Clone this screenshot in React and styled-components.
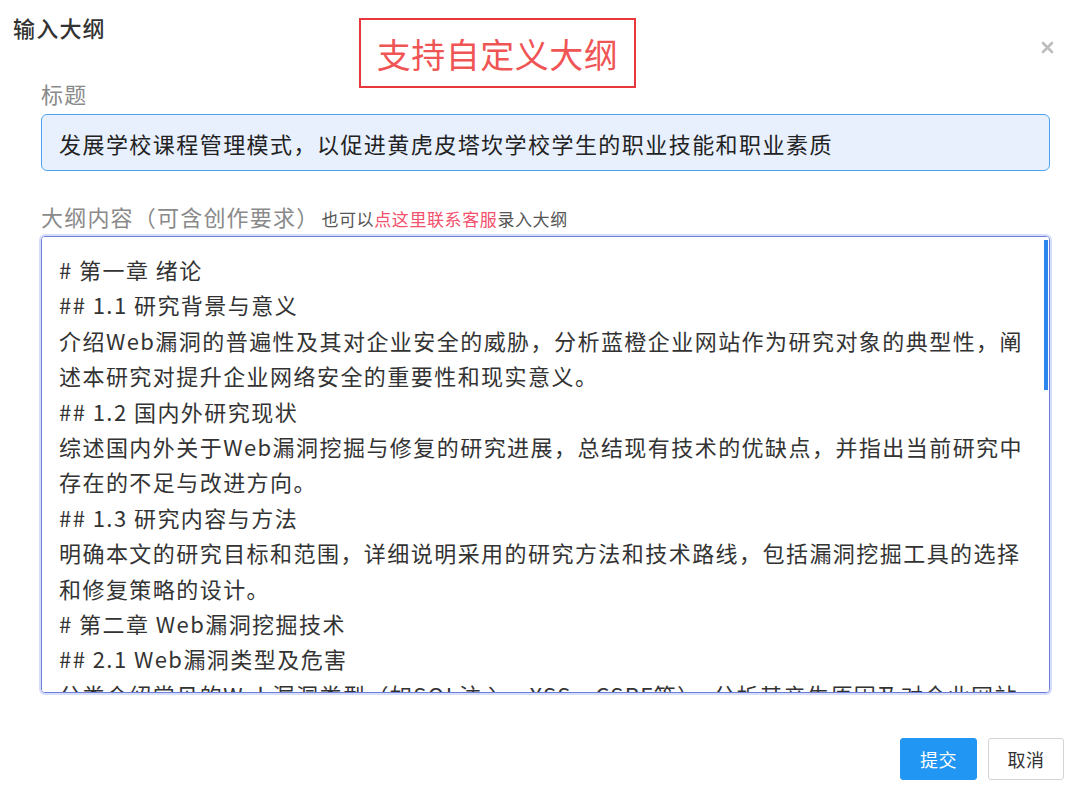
import React from 'react'
import styled, { createGlobalStyle } from 'styled-components'

const GlobalStyle = createGlobalStyle`
  html, body {
    margin: 0;
    padding: 0;
    background: #fff;
  }
  body {
    font-family: "Noto Sans CJK SC", "Noto Sans", sans-serif;
    color: #333;
  }
`

const Modal = styled.div`
  position: relative;
  width: 1080px;
  height: 795px;
  display: flex;
  flex-direction: column;
  box-sizing: border-box;
  background: #fff;
`

const Header = styled.div`
  height: 54px;
  display: flex;
  align-items: center;
  padding-left: 13px;
`

const Title = styled.h3`
  margin: 0;
  font-size: 22px;
  font-weight: 500;
  letter-spacing: 1.2px;
  color: #333;
`

const Annotation = styled.div`
  position: absolute;
  left: 359px;
  top: 18px;
  width: 277px;
  height: 70px;
  box-sizing: border-box;
  border: 2px solid #e8383d;
  display: flex;
  align-items: center;
  justify-content: center;
  font-size: 34px;
  color: #f05555;
  letter-spacing: 0.5px;
`

const CloseButton = styled.button`
  position: absolute;
  top: 38px;
  right: 24px;
  width: 18px;
  height: 18px;
  padding: 0;
  border: 0;
  background: none;
  cursor: pointer;
  display: flex;
  align-items: center;
  justify-content: center;
`

const Body = styled.div`
  padding: 24px 30px 0 41px;
  display: flex;
  flex-direction: column;
`

const Label = styled.label`
  display: flex;
  align-items: baseline;
  height: 30px;
  font-size: 22px;
  line-height: 30px;
  letter-spacing: 1.2px;
  color: #8a8a8a;
  margin-bottom: ${({ $gap }) => $gap}px;
  white-space: nowrap;
`

const Hint = styled.span`
  font-size: 17px;
  line-height: 20px;
  letter-spacing: 0.6px;
  color: #555;
  margin-left: 2px;
`

const HintLink = styled.a`
  color: #f2506c;
  text-decoration: none;
  cursor: pointer;
`

const TitleInput = styled.input`
  box-sizing: border-box;
  width: 100%;
  height: 57px;
  padding: 0 17px;
  border: 1px solid #4ea4f4;
  border-radius: 6px;
  background: #e8f0fe;
  font-family: inherit;
  font-size: 22px;
  letter-spacing: 1.45px;
  color: #222;
  outline: none;
  margin-bottom: 30px;
`

const AreaWrap = styled.div`
  position: relative;
  height: 457px;
`

const OutlineArea = styled.textarea`
  box-sizing: border-box;
  width: 100%;
  height: 100%;
  padding: 15px 8px 16px 17px;
  border: 1px solid #6b80dc;
  border-radius: 4px;
  box-shadow: 0 0 0 2px rgba(130, 148, 232, 0.32);
  font-family: inherit;
  font-size: 22px;
  line-height: 35.4px;
  letter-spacing: 1.45px;
  color: #333;
  resize: none;
  outline: none;
  white-space: pre-wrap;
  overflow-y: auto;
  overflow-x: hidden;
  scrollbar-width: none;

  &::-webkit-scrollbar {
    display: none;
  }
`

const ScrollThumb = styled.div`
  position: absolute;
  top: 4px;
  right: 2px;
  width: 4px;
  height: 150px;
  background: #2d86ee;
  pointer-events: none;
`

const Footer = styled.div`
  display: flex;
  justify-content: flex-end;
  align-items: flex-start;
  gap: 11px;
  padding: 45px 16px 0 0;
`

const Button = styled.button`
  width: ${({ $primary }) => ($primary ? 77 : 76)}px;
  height: 42px;
  border-radius: 3px;
  border: 1px solid ${({ $primary }) => ($primary ? '#2196f3' : '#d4d4d4')};
  background: ${({ $primary }) => ($primary ? '#2196f3' : '#fff')};
  color: ${({ $primary }) => ($primary ? '#fff' : '#333')};
  font-family: inherit;
  font-size: 18px;
  letter-spacing: 0.5px;
  cursor: pointer;
`

const outline = `# 第一章 绪论
## 1.1 研究背景与意义
介绍Web漏洞的普遍性及其对企业安全的威胁，分析蓝橙企业网站作为研究对象的典型性，阐
述本研究对提升企业网络安全的重要性和现实意义。
## 1.2 国内外研究现状
综述国内外关于Web漏洞挖掘与修复的研究进展，总结现有技术的优缺点，并指出当前研究中
存在的不足与改进方向。
## 1.3 研究内容与方法
明确本文的研究目标和范围，详细说明采用的研究方法和技术路线，包括漏洞挖掘工具的选择
和修复策略的设计。
# 第二章 Web漏洞挖掘技术
## 2.1 Web漏洞类型及危害
分类介绍常见的Web漏洞类型（如SQL注入、XSS、CSRF等），分析其产生原因及对企业网站
的潜在危害。
## 2.2 漏洞挖掘方法
介绍静态分析、动态分析与模糊测试等漏洞挖掘方法，比较各自的适用场景和局限性。
## 2.3 漏洞挖掘工具
介绍常用的漏洞扫描与渗透测试工具，说明其原理、功能及使用方法。
# 第三章 蓝橙企业网站漏洞挖掘实践
## 3.1 网站架构分析
分析蓝橙企业网站的系统架构、技术栈与业务功能，确定测试范围。
## 3.2 漏洞扫描与验证
使用扫描工具对网站进行全面检测，并通过人工方式验证漏洞的真实性。
## 3.3 漏洞分析与评估
对发现的漏洞进行分类整理，评估其风险等级与影响范围。
# 第四章 Web漏洞修复策略
## 4.1 修复原则
提出漏洞修复应遵循的基本原则，确保修复的有效性与系统的稳定性。
## 4.2 具体修复方案
针对各类漏洞给出具体的修复方案与代码示例。
## 4.3 修复效果验证
通过复测验证修复效果，确保漏洞被彻底消除。
# 第五章 总结与展望
## 5.1 研究总结
总结本文的主要工作与研究成果。
## 5.2 研究展望
指出研究的不足之处，展望未来的研究方向。`

const CloseIcon = () => (
  <svg width="13" height="13" viewBox="0 0 13 13">
    <path d="M2 2 L11 11 M11 2 L2 11" stroke="#bdbdbd" strokeWidth="2.6" strokeLinecap="round" />
  </svg>
)

const App = () => {
  return (
    <Modal>
      <GlobalStyle />
      <Header>
        <Title>输入大纲</Title>
      </Header>
      <Annotation>支持自定义大纲</Annotation>
      <CloseButton aria-label="关闭"><CloseIcon /></CloseButton>
      <Body>
        <Label $gap={6}>标题</Label>
        <TitleInput defaultValue="发展学校课程管理模式，以促进黄虎皮塔坎学校学生的职业技能和职业素质" />
        <Label $gap={5}>
          大纲内容（可含创作要求）
          <Hint>也可以<HintLink>点这里联系客服</HintLink>录入大纲</Hint>
        </Label>
        <AreaWrap>
          <OutlineArea defaultValue={outline} />
          <ScrollThumb />
        </AreaWrap>
      </Body>
      <Footer>
        <Button $primary>提交</Button>
        <Button>取消</Button>
      </Footer>
    </Modal>
  )
}

export default App
